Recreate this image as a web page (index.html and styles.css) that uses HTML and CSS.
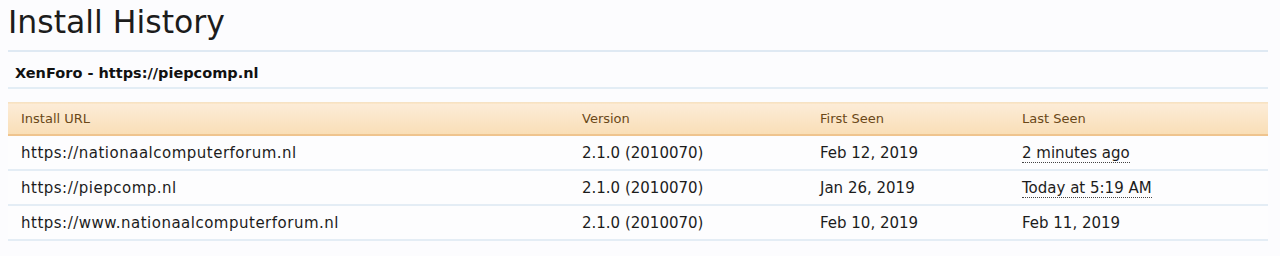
FILE: index.html
```html
<!DOCTYPE html>
<html>
<head>
<meta charset="utf-8">
<link rel="stylesheet" href="styles.css">
</head>
<body>
<h1 class="title">Install History</h1>
<h2 class="subhead">XenForo - https://piepcomp.nl</h2>
<table class="grid">
  <thead>
    <tr>
      <th class="c-url">Install URL</th>
      <th class="c-ver">Version</th>
      <th class="c-first">First Seen</th>
      <th class="c-last">Last Seen</th>
    </tr>
  </thead>
  <tbody>
    <tr>
      <td class="url">https://nationaalcomputerforum.nl</td>
      <td>2.1.0 (2010070)</td>
      <td>Feb 12, 2019</td>
      <td><abbr class="time">2 minutes ago</abbr></td>
    </tr>
    <tr>
      <td class="url">https://piepcomp.nl</td>
      <td>2.1.0 (2010070)</td>
      <td>Jan 26, 2019</td>
      <td><abbr class="time">Today at 5:19 AM</abbr></td>
    </tr>
    <tr>
      <td class="url">https://www.nationaalcomputerforum.nl</td>
      <td>2.1.0 (2010070)</td>
      <td>Feb 10, 2019</td>
      <td>Feb 11, 2019</td>
    </tr>
  </tbody>
</table>
</body>
</html>
```
FILE: styles.css
```css
html, body {
  background: #fcfcfe;
}
body {
  margin: 0;
  padding: 0 12px 0 8px;
  font-family: "DejaVu Sans", Verdana, sans-serif;
  color: #1a1a1a;
}
.title {
  margin: 0;
  font-weight: normal;
  font-size: 31.5px;
  line-height: 44px;
  padding-bottom: 6px;
  border-bottom: 2px solid #dfe9f3;
  color: #1c1c1c;
}
.subhead {
  margin: 0;
  font-size: 14.5px;
  font-weight: bold;
  padding: 8px 7px 0;
  line-height: 27px;
  height: 27px;
  border-bottom: 2px solid #e3edf5;
  color: #111;
}
.grid {
  margin-top: 13px;
  width: 100%;
  border-collapse: collapse;
  font-size: 15px;
}
.grid th {
  text-align: left;
  font-weight: normal;
  font-size: 13px;
  color: #6a4818;
  height: 31px;
  padding: 0 13px;
  background: linear-gradient(to bottom, #fcecd8 0%, #f9deb6 100%);
  border-top: 1px solid #f6e2c4;
  border-bottom: 2px solid #efc48e;
}
.grid td {
  height: 33px;
  padding: 0 13px;
  border-bottom: 2px solid #e4edf5;
  background: #fdfdfe;
  color: #1c1c1c;
}
.grid td.url {
  letter-spacing: 0.5px;
}
.c-url { width: 535px; }
.c-ver { width: 212px; }
.c-first { width: 176px; }
.time {
  text-decoration: none;
  border-bottom: 1px dotted #444;
}
```
